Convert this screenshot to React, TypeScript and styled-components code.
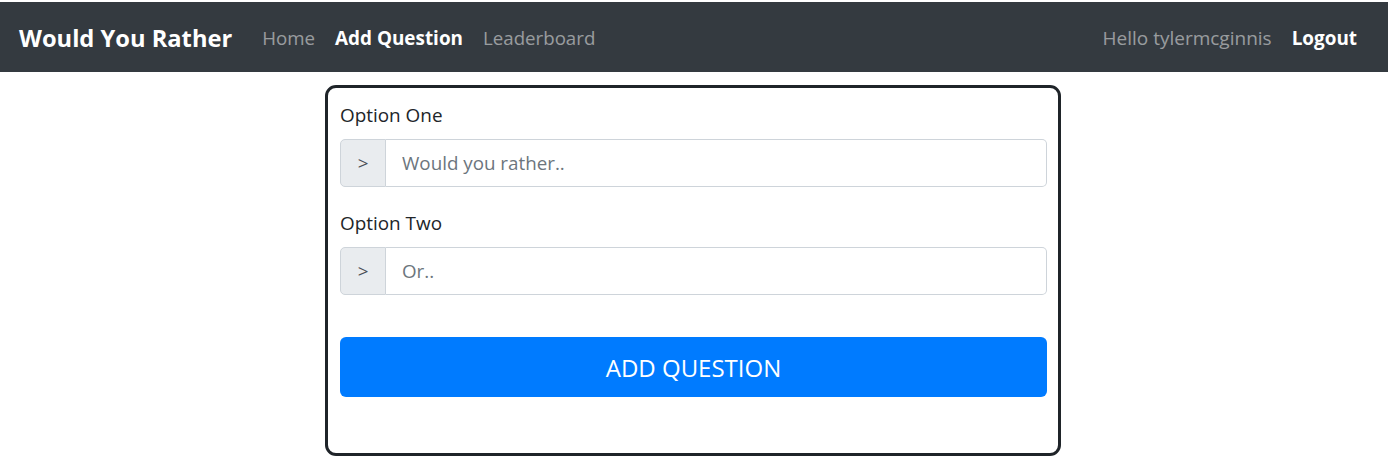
import React from "react";
import styled, { createGlobalStyle } from "styled-components";

const GlobalStyle = createGlobalStyle`
  * { box-sizing: border-box; }
  body {
    margin: 0;
    padding-top: 2px;
    background: #fff;
    font-family: "Open Sans", "Noto Sans", sans-serif;
    color: #212529;
  }
  input::placeholder { color: #6c757d; opacity: 1; }
`;

const NavBar = styled.nav`
  height: 70px;
  background: #343a40;
  display: flex;
  align-items: center;
  justify-content: space-between;
  padding: 1px 21px 0 19px;
`;

const NavGroup = styled.div`
  display: flex;
  align-items: center;
`;

const Brand = styled.a`
  font-size: 23.7px;
  font-weight: 700;
  color: #fff;
  margin-right: 20px;
  white-space: nowrap;
  text-decoration: none;
`;

const NavLink = styled.a<{ $active?: boolean; $size?: number }>`
  font-size: ${(p) => (p.$size ? `${p.$size}px` : p.$active ? "18.9px" : "18.7px")};
  font-weight: ${(p) => (p.$active ? 700 : 400)};
  color: ${(p) => (p.$active ? "#fff" : "rgba(255,255,255,0.5)")};
  padding: 0 10px;
  white-space: nowrap;
  text-decoration: none;
`;

const Card = styled.form`
  width: 736px;
  margin: 13px calc(50% - 367px) 0 calc(50% - 369px);
  border: 3px solid #1f2429;
  border-radius: 11px;
  padding: 12px 11px 56px 12px;
  display: flex;
  flex-direction: column;
`;

const FormGroup = styled.div`
  display: flex;
  flex-direction: column;
  margin-bottom: 21px;
`;

const Label = styled.label`
  font-size: 18.9px;
  line-height: 30px;
  margin-bottom: 9px;
  color: #212529;
`;

const InputGroup = styled.div`
  display: flex;
  height: 48px;
`;

const Prepend = styled.span`
  width: 46px;
  display: flex;
  align-items: center;
  justify-content: center;
  background: #e9ecef;
  border: 1px solid #ced4da;
  border-radius: 5px 0 0 5px;
  color: #495057;
  font-size: 18.8px;
`;

const TextInput = styled.input`
  flex: 1;
  min-width: 0;
  border: 1px solid #ced4da;
  border-left: none;
  border-radius: 0 5px 5px 0;
  padding: 0 16px;
  font-family: inherit;
  font-size: 18.8px;
  color: #495057;
  background: #fff;
  outline: none;
`;

const SubmitButton = styled.button`
  margin-top: 21px;
  height: 60px;
  border: none;
  border-radius: 6px;
  background: #007bff;
  color: #fff;
  font-family: inherit;
  font-size: 24px;
  text-transform: uppercase;
  cursor: pointer;
`;

export default function App() {
  return (
    <>
      <GlobalStyle />
      <NavBar>
        <NavGroup>
          <Brand>Would You Rather</Brand>
          <NavLink>Home</NavLink>
          <NavLink $active>Add Question</NavLink>
          <NavLink>Leaderboard</NavLink>
        </NavGroup>
        <NavGroup>
          <NavLink $size={19}>Hello tylermcginnis</NavLink>
          <NavLink $active>Logout</NavLink>
        </NavGroup>
      </NavBar>
      <Card onSubmit={(e) => e.preventDefault()}>
        <FormGroup>
          <Label>Option One</Label>
          <InputGroup>
            <Prepend>&gt;</Prepend>
            <TextInput placeholder="Would you rather.." />
          </InputGroup>
        </FormGroup>
        <FormGroup>
          <Label>Option Two</Label>
          <InputGroup>
            <Prepend>&gt;</Prepend>
            <TextInput placeholder="Or.." />
          </InputGroup>
        </FormGroup>
        <SubmitButton type="submit">Add Question</SubmitButton>
      </Card>
    </>
  );
}
